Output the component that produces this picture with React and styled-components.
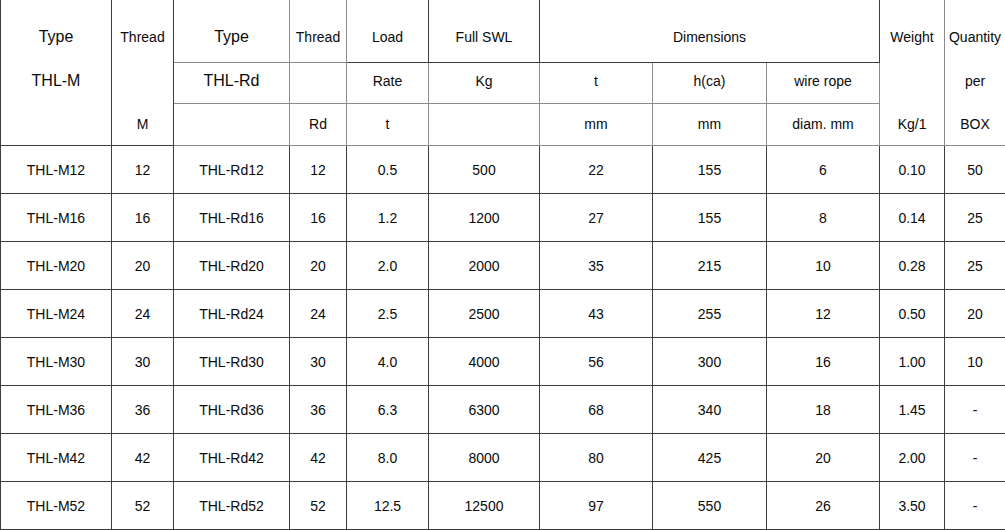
import React from 'react'
import styled, { createGlobalStyle } from 'styled-components'

const GlobalStyle = createGlobalStyle`
  html, body {
    margin: 0;
    padding: 0;
    background: #ffffff;
  }
  body {
    font-family: 'Liberation Sans', Arial, sans-serif;
    color: #000000;
  }
`

const Sheet = styled.table`
  width: 1005px;
  table-layout: fixed;
  border-collapse: collapse;
  color: #0a0a0a;

  & thead tr:first-child > td {
    border-top: 0;
  }
`

const Row = styled.tr`
  height: ${(p) => p.$h}px;
`

// $lift pushes first header line down, $raise nudges the middle line up
const Cell = styled.td`
  border: 1px solid ${(p) => (p.$soft ? '#8c8c8c' : '#3e3e3e')};
  padding: 0;
  padding-top: ${(p) => (p.$lift ? '12px' : '0')};
  padding-bottom: ${(p) => (p.$raise ? '3px' : '0')};
  text-align: center;
  vertical-align: middle;
  font-size: ${(p) => (p.$big ? '16px' : '14px')};
  white-space: nowrap;
  overflow: hidden;
`

const Stack = styled.div`
  display: grid;
  grid-template-rows: 62px 41px 42px;
  height: 145px;
`

const Slot = styled.div`
  display: flex;
  align-items: center;
  justify-content: center;
  padding-top: ${(p) => (p.$lift ? '12px' : '0')};
  padding-bottom: ${(p) => (p.$raise ? '3px' : '0')};
  font-size: ${(p) => (p.$big ? '16px' : '14px')};
`

const widths = [111, 62, 116, 57, 82, 111, 113, 114, 113, 65, 61]

const rows = [
  ['THL-M12', '12', 'THL-Rd12', '12', '0.5', '500', '22', '155', '6', '0.10', '50'],
  ['THL-M16', '16', 'THL-Rd16', '16', '1.2', '1200', '27', '155', '8', '0.14', '25'],
  ['THL-M20', '20', 'THL-Rd20', '20', '2.0', '2000', '35', '215', '10', '0.28', '25'],
  ['THL-M24', '24', 'THL-Rd24', '24', '2.5', '2500', '43', '255', '12', '0.50', '20'],
  ['THL-M30', '30', 'THL-Rd30', '30', '4.0', '4000', '56', '300', '16', '1.00', '10'],
  ['THL-M36', '36', 'THL-Rd36', '36', '6.3', '6300', '68', '340', '18', '1.45', '-'],
  ['THL-M42', '42', 'THL-Rd42', '42', '8.0', '8000', '80', '425', '20', '2.00', '-'],
  ['THL-M52', '52', 'THL-Rd52', '52', '12.5', '12500', '97', '550', '26', '3.50', '-'],
]

const Stacked = ({ lines, big, soft }) => (
  <Cell rowSpan={3} $soft={soft}>
    <Stack>
      {lines.map((t, i) => (
        <Slot key={i} $lift={i === 0} $raise={i === 1} $big={big && i < 2}>
          {t}
        </Slot>
      ))}
    </Stack>
  </Cell>
)

export default function App() {
  return (
    <>
      <GlobalStyle />
      <Sheet>
        <colgroup>
          {widths.map((w, i) => (
            <col key={i} style={{ width: w }} />
          ))}
        </colgroup>
        <thead>
          <Row $h={62}>
            <Stacked lines={['Type', 'THL-M', '']} big />
            <Stacked lines={['Thread', '', 'M']} />
            <Cell $lift $big $soft>Type</Cell>
            <Cell $lift $soft>Thread</Cell>
            <Cell $lift>Load</Cell>
            <Cell $lift>Full SWL</Cell>
            <Cell $lift colSpan={3}>Dimensions</Cell>
            <Stacked lines={['Weight', '', 'Kg/1']} soft />
            <Stacked lines={['Quantity', 'per', 'BOX']} soft />
          </Row>
          <Row $h={41}>
            <Cell $raise $big $soft>THL-Rd</Cell>
            <Cell $raise $soft></Cell>
            <Cell $raise $soft>Rate</Cell>
            <Cell $raise $soft>Kg</Cell>
            <Cell $raise $soft>t</Cell>
            <Cell $raise $soft>h(ca)</Cell>
            <Cell $raise $soft>wire rope</Cell>
          </Row>
          <Row $h={42}>
            <Cell $soft></Cell>
            <Cell $soft>Rd</Cell>
            <Cell $soft>t</Cell>
            <Cell $soft></Cell>
            <Cell $soft>mm</Cell>
            <Cell $soft>mm</Cell>
            <Cell $soft>diam. mm</Cell>
          </Row>
        </thead>
        <tbody>
          {rows.map((r) => (
            <Row key={r[0]} $h={48}>
              {r.map((v, i) => (
                <Cell key={i}>{v}</Cell>
              ))}
            </Row>
          ))}
        </tbody>
      </Sheet>
    </>
  )
}
